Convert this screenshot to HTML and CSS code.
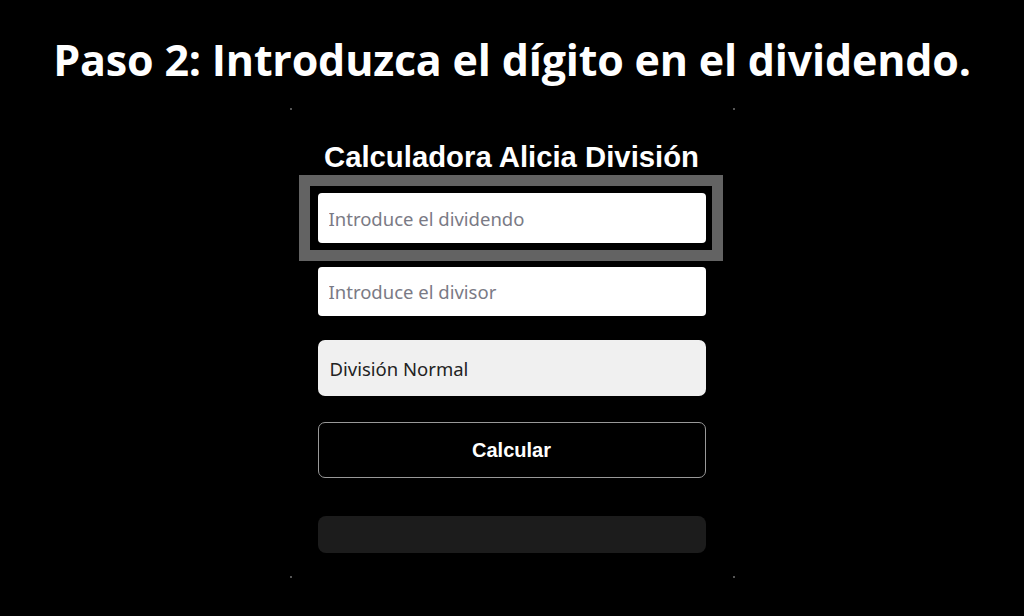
FILE: index.html
```html
<!DOCTYPE html>
<html lang="es">
<head>
<meta charset="utf-8">
<title>Paso 2</title>
<link rel="stylesheet" href="styles.css">
</head>
<body>
<div class="page">
  <h1 class="step-title">Paso 2: Introduzca el dígito en el dividendo.</h1>
  <div class="panel">
    <span class="dot dot-tl"></span>
    <span class="dot dot-tr"></span>
    <span class="dot dot-bl"></span>
    <span class="dot dot-br"></span>
    <h2 class="calc-title">Calculadora Alicia División</h2>
    <div class="form">
      <div class="field-wrap">
        <input class="field" type="text" placeholder="Introduce el dividendo">
        <span class="highlight"></span>
      </div>
      <input class="field" type="text" placeholder="Introduce el divisor">
      <div class="select">División Normal</div>
      <button class="btn" type="button">Calcular</button>
      <div class="result"></div>
    </div>
  </div>
</div>
</body>
</html>
```

FILE: styles.css
```css
html, body {
  margin: 0;
  padding: 0;
  background: #000;
}
.page {
  width: 1024px;
  height: 616px;
  display: flex;
  flex-direction: column;
  align-items: center;
  overflow: hidden;
}
.step-title {
  margin: 31px 0 0;
  font-family: "Open Sans", "Noto Sans", sans-serif;
  font-weight: 700;
  font-size: 43px;
  line-height: 58px;
  color: #fff;
  letter-spacing: -0.2px;
  white-space: nowrap;
}
.panel {
  position: relative;
  width: 445px;
  height: 470px;
  margin-top: 19px;
  box-sizing: border-box;
  padding: 0 29px 0 28px;
  display: flex;
  flex-direction: column;
}
.dot {
  position: absolute;
  width: 2px;
  height: 2px;
  background: #555;
}
.dot-tl { left: 0; top: 0; }
.dot-tr { right: 0; top: 0; }
.dot-bl { left: 0; bottom: 0; }
.dot-br { right: 0; bottom: 0; }
.calc-title {
  margin: 32px 0 0;
  text-align: center;
  font-family: "Liberation Sans", Arial, sans-serif;
  font-weight: 700;
  font-size: 29.3px;
  line-height: 34px;
  color: #fff;
  white-space: nowrap;
}
.form {
  margin-top: 19px;
  display: flex;
  flex-direction: column;
  gap: 24px;
}
.field-wrap {
  position: relative;
  display: flex;
}
.highlight {
  position: absolute;
  left: -19px;
  right: -17px;
  top: -18px;
  bottom: -18px;
  border: 11px solid #636363;
  pointer-events: none;
}
.field {
  display: block;
  width: 100%;
  height: 50px;
  box-sizing: border-box;
  margin: 0;
  border: none;
  border-radius: 4px;
  background: #fff;
  padding: 0 11px;
  font-family: "Noto Sans", "Open Sans", sans-serif;
  font-size: 18.5px;
  color: #222;
  outline: none;
}
.field::placeholder {
  color: #7a7a85;
}
.field-wrap + .field {
  height: 49px;
}
.select {
  height: 56px;
  box-sizing: border-box;
  border-radius: 7px;
  background: #f0f0f0;
  padding: 0 12px;
  display: flex;
  align-items: center;
  font-family: "Noto Sans", "Open Sans", sans-serif;
  font-size: 18.5px;
  color: #222;
}
.btn {
  height: 56px;
  margin-top: 2px;
  box-sizing: border-box;
  border: 1.5px solid #999;
  border-radius: 7px;
  background: #000;
  color: #fff;
  font-family: "Liberation Sans", Arial, sans-serif;
  font-weight: 700;
  font-size: 20px;
  padding: 0;
}
.result {
  height: 37px;
  margin-top: 14px;
  border-radius: 8px;
  background: #1c1c1c;
}
```
